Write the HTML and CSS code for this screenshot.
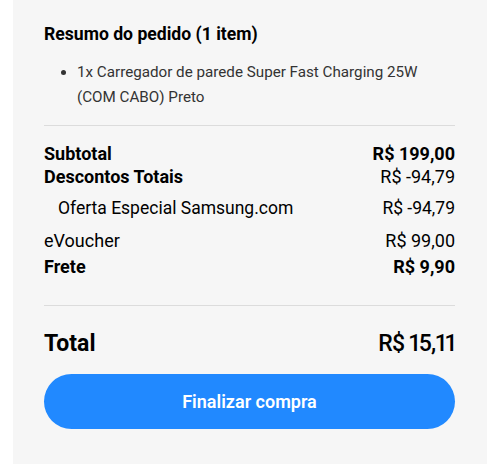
FILE: index.html
```html
<!DOCTYPE html>
<html lang="pt-BR">
<head>
    <meta charset="UTF-8">
    <title>Resumo do pedido</title>
    <link rel="stylesheet" href="styles.css">
</head>
<body>
<div class="card">
    <h2 class="title">Resumo do pedido (1 item)</h2>
    <ul class="items">
        <li>1x Carregador de parede Super Fast Charging 25W (COM CABO) Preto</li>
    </ul>
    <hr class="divider">

    <div class="rows">
        <div class="row bold"><span>Subtotal</span><span>R$ 199,00</span></div>
        <div class="row"><span class="bold">Descontos Totais</span><span>R$ -94,79</span></div>
        <div class="row sub"><span>Oferta Especial Samsung.com</span><span>R$ -94,79</span></div>
        <div class="row voucher"><span>eVoucher</span><span>R$ 99,00</span></div>
        <div class="row bold shipping"><span>Frete</span><span>R$ 9,90</span></div>
    </div>
    <hr class="divider">

    <div class="row total"><span class="bold">Total</span><span class="amount">R$ 15,11</span></div>
    <button type="button" class="checkout">Finalizar compra</button>
</div>
</body>
</html>
```

FILE: styles.css
```css
body {
    margin: 0;
    background: #fff;
    font-family: Roboto, "Noto Sans", sans-serif;
    color: #000;
}

.card {
    margin: 0 13px;
    height: 464px;
    box-sizing: border-box;
    padding: 22px 32px 0 31px;
    background: #f6f6f6;
}

.title {
    margin: 0;
    font-size: 17.6px;
    line-height: 24px;
    font-weight: 700;
}

.items {
    margin: 14px 0 0 0;
    padding-left: 33px;
    font-size: 15.2px;
    line-height: 25px;
    color: #333;
}

.divider {
    margin: 15px 0 0 0;
    border: none;
    border-top: 1px solid #dcdcdc;
}

.rows {
    padding-top: 16px;
}

.row {
    display: flex;
    justify-content: space-between;
    font-size: 18px;
    line-height: 23px;
}

.bold {
    font-weight: 700;
}

.row.sub {
    margin-top: 9px;
    padding-left: 14px;
    font-size: 17.5px;
}

.row.voucher {
    margin-top: 9px;
}

.row.shipping {
    margin-top: 3px;
}

.rows + .divider {
    margin-top: 27px;
}

.row.total {
    margin-top: 24px;
    font-size: 23px;
    line-height: 28px;
}

.amount {
    font-weight: 500;
    letter-spacing: -0.8px;
    font-variant-numeric: proportional-nums;
}

.checkout {
    display: block;
    width: 100%;
    height: 55px;
    margin-top: 16px;
    border: none;
    border-radius: 28px;
    background: #2189ff;
    color: #fff;
    font-family: inherit;
    font-size: 18px;
    font-weight: 600;
}
```
